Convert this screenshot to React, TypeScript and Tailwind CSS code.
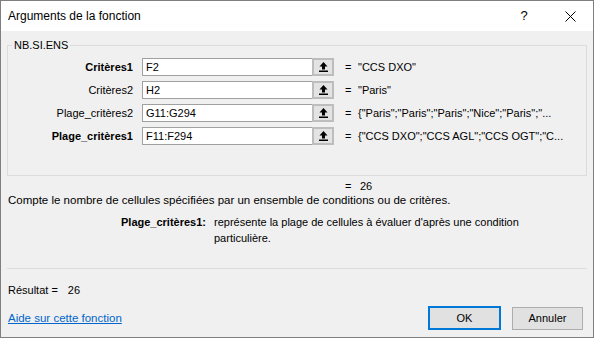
import React from "react";

interface ArgRow {
  label: string;
  bold: boolean;
  ref: string;
  value: string;
}

const rows: ArgRow[] = [
  { label: "Critères1", bold: true, ref: "F2", value: '"CCS DXO"' },
  { label: "Critères2", bold: false, ref: "H2", value: '"Paris"' },
  {
    label: "Plage_critères2",
    bold: false,
    ref: "G11:G294",
    value: '{"Paris";"Paris";"Paris";"Nice";"Paris";"...',
  },
  {
    label: "Plage_critères1",
    bold: true,
    ref: "F11:F294",
    value: '{"CCS DXO";"CCS AGL";"CCS OGT";"C...',
  },
];

function CollapseIcon() {
  return (
    <svg width="9" height="10" viewBox="0 0 9 10">
      <path d="M4.5 0 L8.5 4.5 L6 4.5 L6 7.5 L3 7.5 L3 4.5 L0.5 4.5 Z" fill="#000" />
      <rect x="0" y="8.5" width="9" height="1.5" fill="#000" />
    </svg>
  );
}

function ArgumentRow({ row }: { row: ArgRow }) {
  return (
    <div className="flex h-[18px] items-center">
      <span className={`w-[125px] text-right ${row.bold ? "font-bold" : ""}`}>{row.label}</span>
      <div className="ml-[9px] flex h-[18px] w-[170px] items-center border border-r-0 border-[#a0a0a0] bg-white pl-[3px]">
        {row.ref}
      </div>
      <div className="flex h-[18px] w-[22px] items-center justify-center border-2 border-[#bdbdbd] bg-[#e3e3e3]">
        <CollapseIcon />
      </div>
      <span className="ml-[11px] w-[13px]">=</span>
      <span className="whitespace-nowrap">{row.value}</span>
    </div>
  );
}

export default function App() {
  return (
    <div className="flex h-[338px] w-[594px] flex-col border border-[#7f7f7f] bg-[#f0f0f0] font-['Liberation_Sans',Arial,sans-serif] text-[11px] leading-[14px] text-black">
      {/* Title bar */}
      <div className="flex h-[30px] shrink-0 items-center bg-white">
        <span className="flex-1 pl-[7px] text-[12px]">Arguments de la fonction</span>
        <span className="w-[46px] text-center text-[13px]">?</span>
        <div className="flex w-[46px] items-center justify-center">
          <svg width="11" height="11" viewBox="0 0 11 11">
            <path d="M0.5 0.5 L10.5 10.5 M10.5 0.5 L0.5 10.5" stroke="#000" strokeWidth="1" />
          </svg>
        </div>
      </div>

      <div className="flex flex-1 flex-col px-[6px]">
        {/* Arguments group */}
        <fieldset className="mt-[7px] border border-[#dcdcdc] px-0 pt-[6px] pb-[30px]">
          <legend className="ml-[4px] px-[2px] leading-[14px]">NB.SI.ENS</legend>
          <div className="flex flex-col gap-[5px]">
            {rows.map((row) => (
              <ArgumentRow key={row.label} row={row} />
            ))}
          </div>
        </fieldset>

        <div className="mt-[3px] flex pl-[338px]">
          <span className="w-[15px]">=</span>
          <span>26</span>
        </div>

        <div className="pl-[1px] text-[11.5px]">
          Compte le nombre de cellules spécifiées par un ensemble de conditions ou de critères.
        </div>

        <div className="mt-[7px] flex leading-[16px]">
          <span className="w-[199px] text-right font-bold">Plage_critères1:</span>
          <span className="ml-[8px]">
            représente la plage de cellules à évaluer d'après une condition
            <br />
            particulière.
          </span>
        </div>

        <div className="mt-[22px] h-px bg-[#dcdcdc]" />

        <div className="mt-[14px] flex pl-[1px]">
          <span>Résultat =</span>
          <span className="ml-[10px]">26</span>
        </div>

        <div className="mt-[9px] flex h-[24px] items-center">
          <span className="flex-1 pl-[1px] text-[11.5px] text-[#0066cc] underline">Aide sur cette fonction</span>
          <button
            type="button"
            className="flex h-[24px] w-[73px] items-center justify-center border-2 border-[#0078d7] bg-[#e1e1e1]"
          >
            OK
          </button>
          <button
            type="button"
            className="ml-[11px] mr-[4px] flex h-[23px] w-[71px] items-center justify-center border border-[#adadad] bg-[#e1e1e1]"
          >
            Annuler
          </button>
        </div>
      </div>
    </div>
  );
}
